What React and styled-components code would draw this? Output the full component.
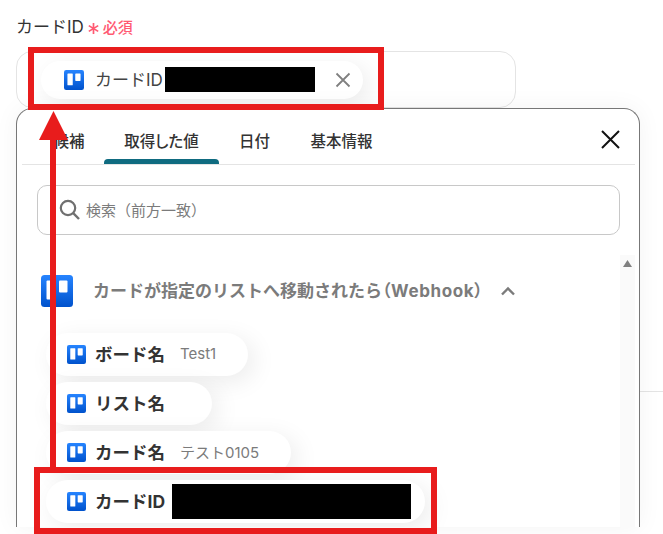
import React from 'react';
import styled, { createGlobalStyle } from 'styled-components';

const GlobalStyle = createGlobalStyle`
  html, body {
    margin: 0;
    padding: 0;
    background: #fff;
    overflow: hidden;
  }
  body {
    font-family: Inter, "Noto Sans CJK JP", "Noto Sans", sans-serif;
    color: #333;
  }
`;

const Page = styled.div`
  position: relative;
  width: 663px;
  height: 534px;
  overflow: hidden;
  padding: 15px 0 0 16px;
  box-sizing: border-box;
`;

const LabelRow = styled.div`
  display: flex;
  align-items: center;
  height: 22px;
  margin-bottom: 14px;
`;

const Label = styled.span`
  font-size: 17px;
  color: #333;
  padding-bottom: 2px;
`;

const Asterisk = styled.svg`
  width: 11px;
  height: 11px;
  margin: 4px 0 0 4px;
`;

const Required = styled.span`
  margin-left: 4px;
  color: #ff5a72;
  font-size: 15px;
  font-weight: 500;
`;

const Field = styled.div`
  display: flex;
  align-items: center;
  width: 500px;
  height: 57px;
  box-sizing: border-box;
  padding-left: 24px;
  border: 1px solid #e4e4e4;
  border-radius: 16px;
`;

const Chip = styled.div`
  display: flex;
  align-items: center;
  width: ${({ $width }) => $width}px;
  height: ${({ $height }) => $height}px;
  box-sizing: border-box;
  padding-left: ${({ $pad }) => $pad}px;
  background: #fff;
  border-radius: 24px;
  box-shadow: 6px 6px 24px rgba(0, 0, 0, 0.08);
  flex-shrink: 0;
`;

const ChipText = styled.span`
  margin-left: 11px;
  padding-bottom: 2px;
  font-size: 17px;
  color: #444;
  white-space: nowrap;
`;

const Redaction = styled.span`
  display: block;
  flex-shrink: 0;
  width: ${({ $width }) => $width}px;
  height: ${({ $height }) => $height}px;
  margin-left: ${({ $left }) => $left}px;
  background: #000;
`;

const Remove = styled.svg`
  width: 18px;
  height: 18px;
  margin-left: 19px;
  flex-shrink: 0;
`;

const Panel = styled.div`
  width: 624px;
  height: 419px;
  box-sizing: border-box;
  border: 1px solid #777;
  border-bottom: none;
  border-radius: 16px 16px 0 0;
  background: #fff;
  box-shadow: 0 0 24px rgba(0, 0, 0, 0.05);
  overflow: hidden;
  position: relative;
  z-index: 1;
`;

const TabBar = styled.div`
  display: flex;
  align-items: stretch;
  justify-content: space-between;
  height: 56px;
  margin: 0 4px 0 5px;
  padding: 0 14px 0 15px;
  border-bottom: 1px solid #e4e4e4;
  box-sizing: border-box;
`;

const Tabs = styled.div`
  display: flex;
`;

const Tab = styled.div`
  position: relative;
  display: flex;
  align-items: center;
  width: ${({ $width }) => $width}px;
  justify-content: center;
  padding: 6px ${({ $trim }) => $trim || 0}px 0 0;
  box-sizing: border-box;
  font-size: 15.5px;
  font-weight: 500;
  font-feature-settings: "palt";
  color: #333;
  white-space: nowrap;

  &::after {
    content: '';
    display: ${({ $active }) => ($active ? 'block' : 'none')};
    position: absolute;
    left: 0;
    right: 0;
    bottom: 0;
    height: 5px;
    border-radius: 4px 4px 0 0;
    background: #0f6b80;
  }
`;

const CloseIcon = styled.svg`
  align-self: center;
  margin: 5px 0 0;
  width: 21px;
  height: 21px;
`;

const SearchBox = styled.div`
  display: flex;
  align-items: center;
  height: 50px;
  box-sizing: border-box;
  margin: 20px 19px 20px 20px;
  padding-left: 21px;
  border: 1px solid #c8c8c8;
  border-radius: 10px;
`;

const SearchIcon = styled.svg`
  width: 22px;
  height: 22px;
`;

const SearchText = styled.span`
  margin-left: 5px;
  padding-bottom: 2px;
  font-size: 15px;
  color: #7b7b7b;
`;

const Body = styled.div`
  display: flex;
`;

const List = styled.div`
  flex: 1;
  padding: 20px 0 0 24px;
`;

const SectionHeader = styled.div`
  display: flex;
  align-items: center;
  height: 32px;
  margin-bottom: 26px;
`;

const SectionTitle = styled.span`
  margin-left: 20px;
  padding-bottom: 3px;
  font-size: 17px;
  font-weight: 700;
  color: #7b7b7b;
  white-space: nowrap;
`;

const SourceName = styled.span`
  font-feature-settings: "palt";
  letter-spacing: 0.6px;
`;

const Chevron = styled.svg`
  width: 16px;
  height: 16px;
  margin-left: 17px;
`;

const ValueList = styled.div`
  display: flex;
  flex-direction: column;
  gap: 6px;
  margin-left: 5px;
`;

const ValueName = styled.span`
  margin-left: 9px;
  padding-bottom: 3px;
  font-size: 17.5px;
  font-weight: 700;
  color: #333;
  white-space: nowrap;
`;

const ValueHint = styled.span`
  margin-left: 15px;
  padding-bottom: 2px;
  font-size: 15px;
  color: #7b7b7b;
  white-space: nowrap;
`;

const Scrollbar = styled.div`
  width: 15px;
  height: 272px;
  margin-right: 4px;
  background: #fafafa;
  display: flex;
  justify-content: center;
  padding-top: 5px;
  box-sizing: border-box;
`;

const ScrollArrow = styled.svg`
  width: 9px;
  height: 7px;
`;

const BackdropLine = styled.div`
  position: absolute;
  left: 640px;
  right: 0;
  top: 391px;
  height: 1px;
  background: #e4e4e4;
`;

const Annotation = styled.div`
  position: absolute;
  left: ${({ $x }) => $x}px;
  top: ${({ $y }) => $y}px;
  width: ${({ $w }) => $w}px;
  height: ${({ $h }) => $h}px;
  box-sizing: border-box;
  border: 6px solid #e81c1c;
  z-index: 2;
`;

const ArrowShaft = styled.div`
  position: absolute;
  left: 50px;
  top: 138px;
  width: 6px;
  height: 330px;
  background: #e81c1c;
  z-index: 2;
`;

const ArrowHead = styled.svg`
  position: absolute;
  left: 39px;
  top: 111px;
  width: 30px;
  height: 29px;
  z-index: 2;
`;

const TrelloIcon = ({ size = 19 }) => {
  const id = `trello-${size}`;
  return (
    <svg width={size} height={size} viewBox="0 0 32 32" style={{ flexShrink: 0 }}>
      <defs>
        <linearGradient id={id} x1="0" y1="0" x2="0" y2="1">
          <stop offset="0" stopColor="#2684ff" />
          <stop offset="1" stopColor="#0052cc" />
        </linearGradient>
      </defs>
      <rect width="32" height="32" rx="3.5" fill={`url(#${id})`} />
      <rect x="5.5" y="5.5" width="8.5" height="19" rx="1" fill="#fff" />
      <rect x="18" y="5.5" width="8.5" height="12" rx="1" fill="#fff" />
    </svg>
  );
};

const values = [
  { name: 'ボード名', hint: 'Test1', width: 202 },
  { name: 'リスト名', width: 166 },
  { name: 'カード名', hint: 'テスト0105', width: 245 },
];

const App = () => (
  <Page>
    <GlobalStyle />
    <BackdropLine />
    <LabelRow>
      <Label>カードID</Label>
      <Asterisk viewBox="0 0 11 11">
        <path d="M5.5 0V11M0.8 2.6 10.2 8.4M10.2 2.6 0.8 8.4" stroke="#ff5a72" strokeWidth="1.7" fill="none" />
      </Asterisk>
      <Required>必須</Required>
    </LabelRow>
    <Field>
      <Chip $width={322} $height={38} $pad={23}>
        <TrelloIcon size={20} />
        <ChipText>カードID</ChipText>
        <Redaction $width={150} $height={25} $left={2} />
        <Remove viewBox="0 0 18 18">
          <path d="M2.5 2.5 15.5 15.5M15.5 2.5 2.5 15.5" stroke="#808080" strokeWidth="1.8" fill="none" />
        </Remove>
      </Chip>
    </Field>
    <Panel>
      <TabBar>
        <Tabs>
          <Tab $width={67} $trim={3}>候補</Tab>
          <Tab $active $width={115}>取得した値</Tab>
          <Tab $width={71}>日付</Tab>
          <Tab $width={103}>基本情報</Tab>
        </Tabs>
        <CloseIcon viewBox="0 0 21 21">
          <path d="M2 2 19 19M19 2 2 19" stroke="#111" strokeWidth="2" fill="none" />
        </CloseIcon>
      </TabBar>
      <SearchBox>
        <SearchIcon viewBox="0 0 22 22">
          <circle cx="9" cy="9" r="7.2" stroke="#707070" strokeWidth="2.2" fill="none" />
          <path d="M14.2 14.2 20 20" stroke="#707070" strokeWidth="2.4" fill="none" />
        </SearchIcon>
        <SearchText>検索（前方一致）</SearchText>
      </SearchBox>
      <Body>
        <List>
          <SectionHeader>
            <TrelloIcon size={32} />
            <SectionTitle>
              カードが指定のリストへ移動されたら
              <SourceName>（Webhook）</SourceName>
            </SectionTitle>
            <Chevron viewBox="0 0 16 16">
              <path d="M2 11.5 8 5.5 14 11.5" stroke="#7b7b7b" strokeWidth="2.4" fill="none" />
            </Chevron>
          </SectionHeader>
          <ValueList>
            {values.map((value) => (
              <Chip key={value.name} $width={value.width} $height={43} $pad={21}>
                <TrelloIcon />
                <ValueName>{value.name}</ValueName>
                {value.hint && <ValueHint>{value.hint}</ValueHint>}
              </Chip>
            ))}
            <Chip $width={379} $height={43} $pad={21}>
              <TrelloIcon />
              <ValueName>カードID</ValueName>
              <Redaction $width={239} $height={35} $left={7} />
            </Chip>
          </ValueList>
        </List>
        <Scrollbar>
          <ScrollArrow viewBox="0 0 9 7">
            <path d="M4.5 0 9 7H0Z" fill="#808080" />
          </ScrollArrow>
        </Scrollbar>
      </Body>
    </Panel>
    <Annotation $x={28} $y={47} $w={356} $h={63} />
    <Annotation $x={34} $y={467} $w={403} $h={67} />
    <ArrowShaft />
    <ArrowHead viewBox="0 0 30 29">
      <path d="M14.5 0 29 29H0Z" fill="#e81c1c" />
    </ArrowHead>
  </Page>
);

export default App;
